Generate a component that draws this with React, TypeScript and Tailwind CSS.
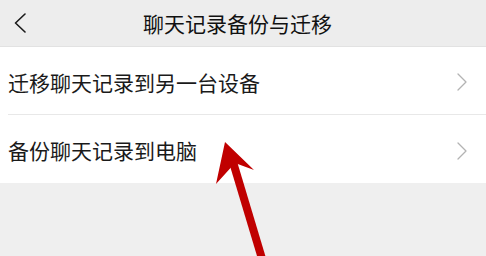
import React from "react";

const rows = ["迁移聊天记录到另一台设备", "备份聊天记录到电脑"];

function RightChevron() {
  return (
    <svg width="10" height="18" viewBox="0 0 10 18" fill="none">
      <path d="M1 1l8 8-8 8" stroke="#b3b3b3" strokeWidth="1.3" strokeLinecap="round" strokeLinejoin="round" />
    </svg>
  );
}

export default function App() {
  return (
    <div
      className="relative w-[486px] h-[256px] overflow-hidden bg-[#efefef] text-[#1a1a1a]"
      style={{ fontFamily: '"Noto Sans CJK SC", "Noto Sans", sans-serif' }}
    >
      {/* top bar */}
      <div className="h-[47px] flex items-center pl-[14px] bg-[#ededed] border-b border-[#e2e2e2]">
        <svg width="12" height="20" viewBox="0 0 12 20" fill="none">
          <path d="M11 1L1.5 10 11 19" stroke="#1a1a1a" strokeWidth="1.6" strokeLinecap="round" strokeLinejoin="round" />
        </svg>
        <span className="ml-[117px] text-[21px] leading-none text-[#111111]">聊天记录备份与迁移</span>
      </div>

      {/* list */}
      <div className="bg-white">
        {rows.map((r, i) => (
          <div key={r} className="pl-[8px]">
            <div
              className={`h-[68px] flex items-center justify-between pr-[19px] pt-[3px] ${
                i === 0 ? "border-b border-[#e8e8e8]" : ""
              }`}
            >
              <span className="text-[21px] leading-none">{r}</span>
              <RightChevron />
            </div>
          </div>
        ))}
      </div>

      {/* red annotation arrow */}
      <svg className="absolute left-0 top-0 pointer-events-none" width="486" height="256" viewBox="0 0 486 256">
        <line x1="233" y1="162" x2="263" y2="262" stroke="#c00000" strokeWidth="8" />
        <polygon points="225,142 254,170 235,163 216,184" fill="#c00000" />
      </svg>
    </div>
  );
}
